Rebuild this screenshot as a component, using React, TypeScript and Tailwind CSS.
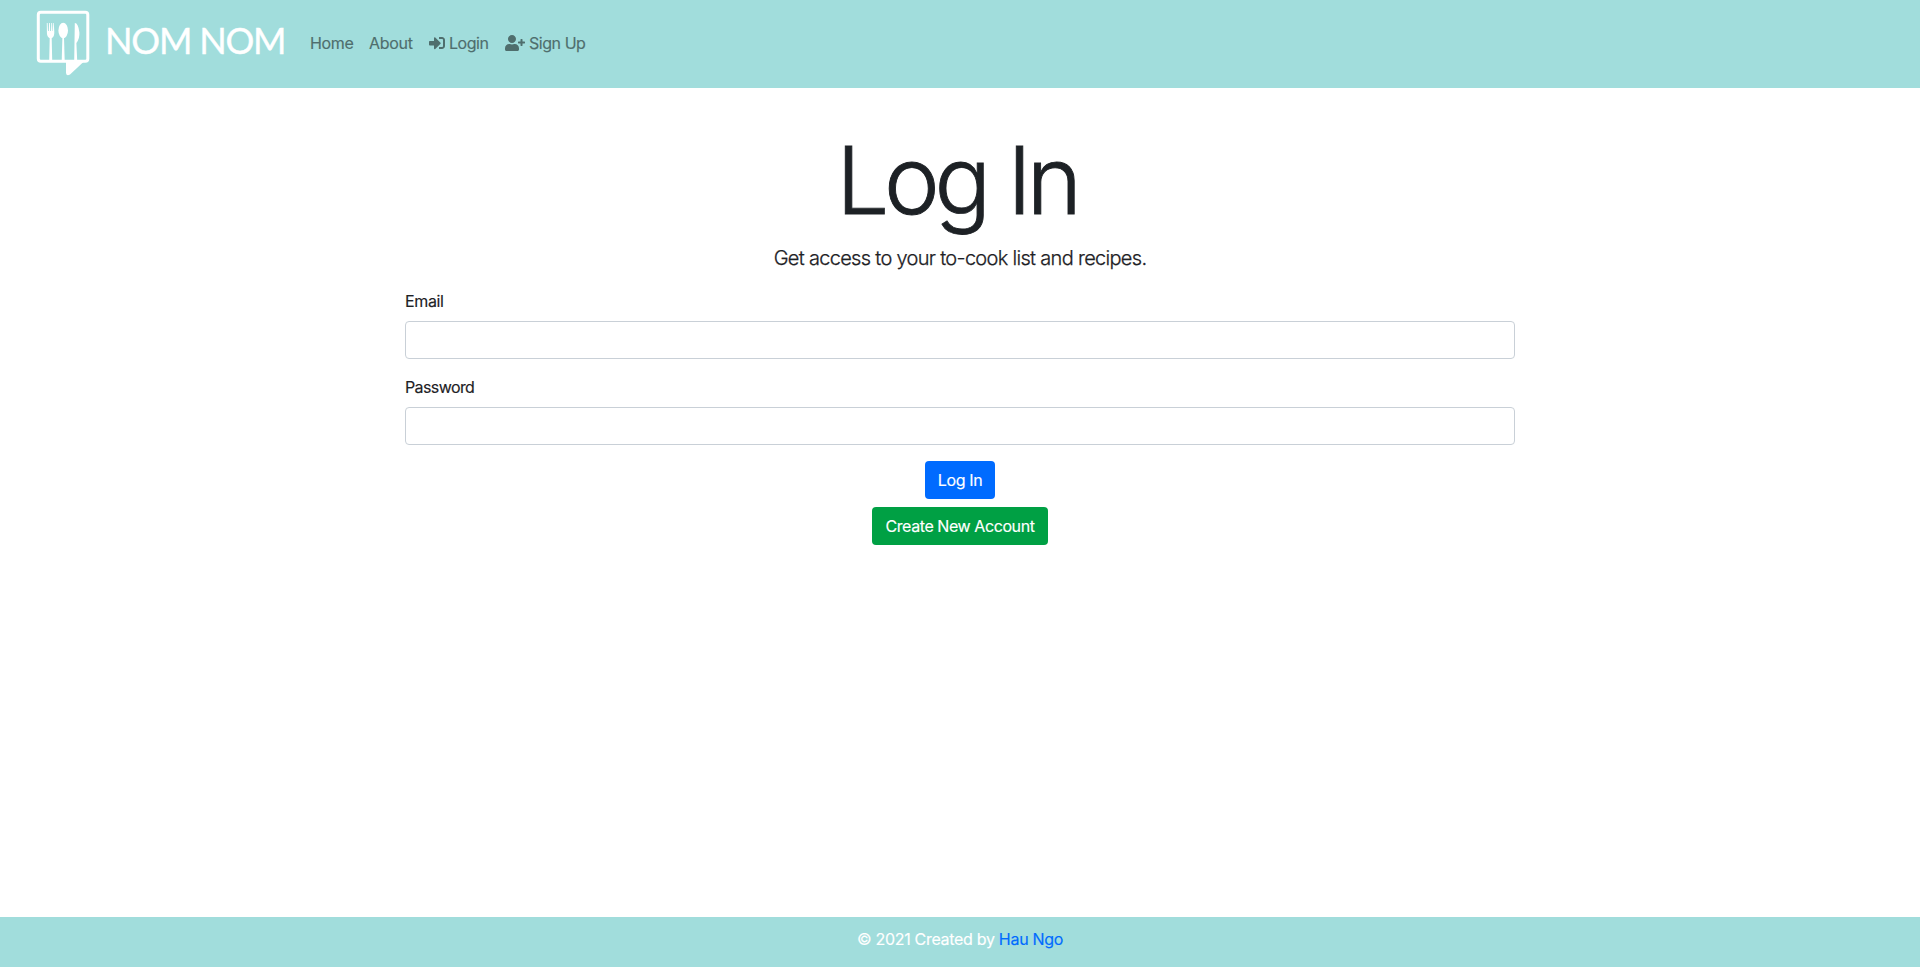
import React from "react";
import { FaSignInAlt, FaUserPlus } from "react-icons/fa";

function Logo() {
  return (
    <svg width="56" height="68" viewBox="0 0 56 68" className="block shrink-0" fill="#fff">
      <rect x="2.3" y="2.3" width="49.500" height="49" rx="2.5" fill="none" stroke="#fff" strokeWidth="3" />
      <path d="M30 51 V63 Q30.500 66.500 34 64.500 L48.500 51 Z" />
      <path d="M10.800 13 h.8 l.4 8 h.8 l.3-8 h.8 l.3 8 h.8 l.3-8 h.8 l.4 8 h.4 l.3-8 h.6 l.5 9 q.2 5-2.600 6.200 l.5 22.300 h-3 l.5-22.300 q-3-1.200-2.800-6.200 z" />
      <ellipse cx="27.200" cy="20.500" rx="4.800" ry="7.700" />
      <path d="M26.400 27 h1.600 l.7 24 h-3 z" />
      <path d="M38.800 13 q3.500 0 4.600 9.500 q.400 6-3 10.500 l.8 18 h-3 z" />
    </svg>
  );
}

function Field({ id, label, type, tracking }: { id: string; label: string; type: string; tracking: string }) {
  return (
    <div className="mb-4">
      <label htmlFor={id} className={"mb-2 block h-6 leading-6 " + tracking}>{label}</label>
      <input id={id} type={type} className="block h-[38px] w-full rounded border border-[#c9d0d7] bg-white px-3 outline-none" />
    </div>
  );
}

export default function App() {
  return (
    <div className="flex h-[967px] w-full flex-col bg-white font-['Inter',sans-serif] text-[16px] text-[#1d2125] [-webkit-text-stroke:0.15px_currentColor]">
      <header className="flex h-[88px] shrink-0 items-center bg-[#a1dddc] pl-[36px] text-[#4f6e6d]">
        <a href="#" className="flex h-[68px] w-[266px] items-center text-white">
          <Logo />
          <span className="-mt-[8px] ml-[13px] font-['Lato',sans-serif] text-[36px] leading-[56px] tracking-[-1.2px] whitespace-nowrap [-webkit-text-stroke:0.4px_white]">NOM NOM</span>
        </a>
        <nav className="flex items-center pb-[2px] leading-6 whitespace-nowrap">
          <a href="#" className="w-[59px] pl-2 tracking-[-0.35px]">Home</a>
          <a href="#" className="w-[60px] pl-2 tracking-[-0.3px]">About</a>
          <a href="#" className="flex w-[76px] items-center gap-1 pl-2 tracking-[-0.45px]"><FaSignInAlt size={16} />Login</a>
          <a href="#" className="flex items-center gap-1 pl-2 tracking-[-0.45px]"><FaUserPlus className="h-4 w-5" />Sign Up</a>
        </nav>
      </header>
      <main className="mx-auto w-[1110px] grow pt-[35px]">
        <h1 className="mb-[5px] h-[115px] pr-[7px] text-center text-[94px] leading-[115px] font-light tracking-[-5.2px] [-webkit-text-stroke:0.9px_currentColor]">Log In</h1>
        <p className="mb-4 h-[30px] text-center text-[20px] leading-[30px] font-light tracking-[-0.69px] [-webkit-text-stroke:0.25px_currentColor]">Get access to your to-cook list and recipes.</p>
        <form>
          <Field id="email" label="Email" type="email" tracking="tracking-[-0.35px]" />
          <Field id="password" label="Password" type="password" tracking="tracking-[-0.6px]" />
          <div className="flex flex-col items-center gap-2">
            <button type="button" className="h-[38px] w-[70px] rounded bg-[#006bff] tracking-[-0.35px] whitespace-nowrap text-white">Log In</button>
            <button type="button" className="h-[38px] w-[176px] rounded bg-[#00a044] tracking-[-0.42px] whitespace-nowrap text-white">Create New Account</button>
          </div>
        </form>
      </main>
      <footer className="h-[50px] shrink-0 bg-[#a1dddc] pt-[10px] text-center leading-6 tracking-[-0.3px] text-white">
        © 2021 Created by <a href="#" className="text-[#006bff]">Hau Ngo</a>
      </footer>
    </div>
  );
}
